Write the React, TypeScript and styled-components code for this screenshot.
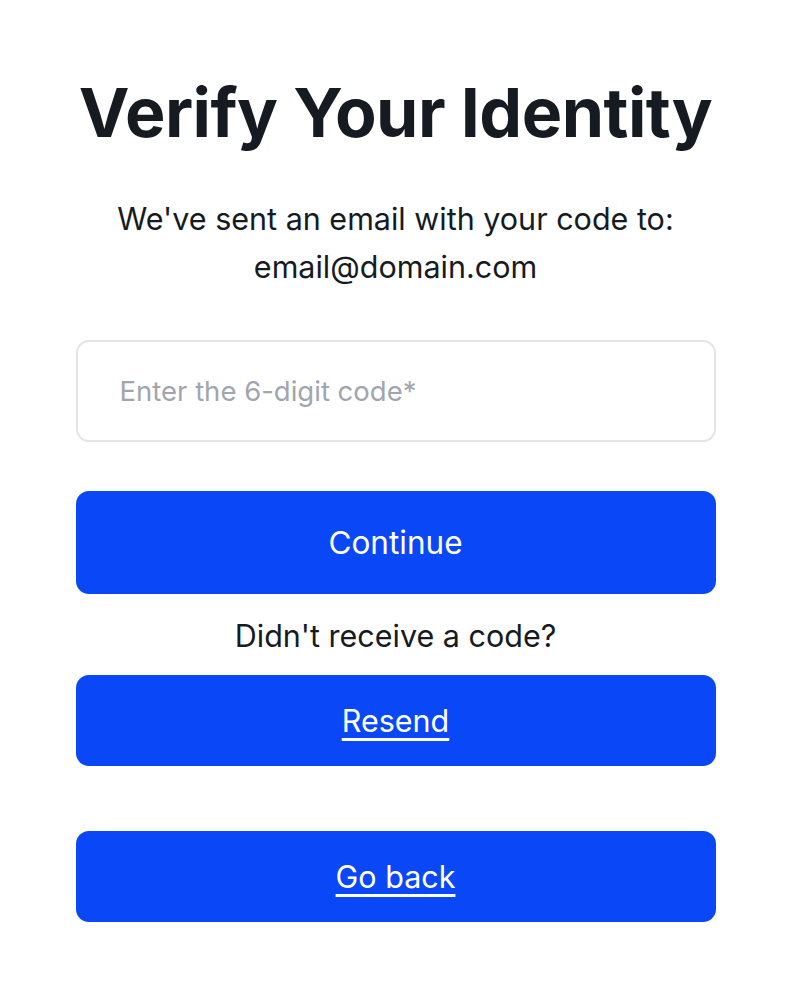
import React, { FC } from "react";
import styled, { createGlobalStyle } from "styled-components";

const GlobalStyle = createGlobalStyle`
  body {
    margin: 0;
    background: #ffffff;
    font-family: Inter, "Noto Sans", "Liberation Sans", sans-serif;
    color: #161b22;
  }
`;

const Page = styled.main`
  width: 640px;
  margin: 0 auto;
  padding: 71px 0 0 1px;
  display: flex;
  flex-direction: column;
`;

const Title = styled.h1`
  margin: 0;
  font-size: 68px;
  line-height: 82px;
  font-weight: 700;
  letter-spacing: -0.5px;
  text-align: center;
  color: #161b22;
`;

const Subtitle = styled.p`
  margin: 42px 0 0;
  font-size: 30.5px;
  line-height: 48px;
  text-align: center;
`;

const CodeInput = styled.input`
  box-sizing: border-box;
  margin-top: 49px;
  width: 100%;
  height: 102px;
  padding: 0 42px;
  border: 2px solid #e2e4e7;
  border-radius: 13px;
  font-family: inherit;
  font-size: 27.5px;
  color: #161b22;
  outline: none;

  &::placeholder {
    color: #a1a5ae;
  }
`;

const Button = styled.button<{ $tall?: boolean; $gap: number; $link?: boolean }>`
  box-sizing: border-box;
  margin-top: ${(p) => p.$gap}px;
  width: 100%;
  height: ${(p) => (p.$tall ? 103 : 91)}px;
  border: none;
  border-radius: 13px;
  background: #0a47f7;
  color: #ffffff;
  font-family: inherit;
  font-size: ${(p) => (p.$tall ? 31.5 : 30.5)}px;
  text-decoration: ${(p) => (p.$link ? "underline" : "none")};
  text-underline-offset: 6px;
  text-decoration-thickness: 2.5px;
  cursor: pointer;
`;

const Hint = styled.p`
  margin: 18px 0 0;
  font-size: 30.5px;
  line-height: 48px;
  text-align: center;
`;

const App: FC = () => {
  return (
    <>
      <GlobalStyle />
      <Page>
        <Title>Verify Your Identity</Title>
        <Subtitle>
          We've sent an email with your code to:
          <br />
          email@domain.com
        </Subtitle>
        <CodeInput placeholder="Enter the 6-digit code*" />
        <Button $tall $gap={49}>
          Continue
        </Button>
        <Hint>Didn't receive a code?</Hint>
        <Button $gap={15} $link>
          Resend
        </Button>
        <Button $gap={65} $link>
          Go back
        </Button>
      </Page>
    </>
  );
};

export default App;
